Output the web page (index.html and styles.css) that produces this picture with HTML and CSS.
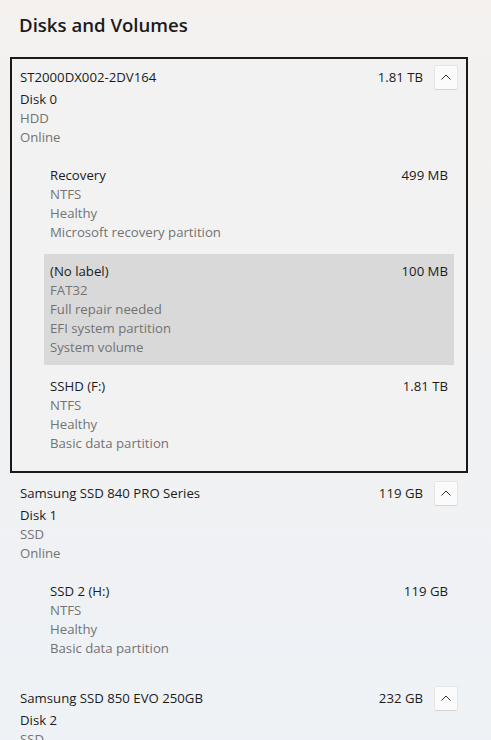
FILE: index.html
```html
<!DOCTYPE html>
<html>
<head>
    <title>Disks and Volumes</title>
    <link rel="stylesheet" href="styles.css">
</head>
<body>
    <h2 class="title">Disks and Volumes</h2>
    <div class="disks">
        <div class="disk focused">
            <div class="disk-head">
                <span class="name">ST2000DX002-2DV164</span>
                <span class="size">1.81 TB</span>
                <button class="toggle"><svg width="10" height="6" viewBox="0 0 10 6"><path d="M0.5 5.5 L5 1 L9.5 5.5" fill="none" stroke="#333" stroke-width="1"/></svg></button>
            </div>
            <div class="line">Disk 0</div>
            <div class="line muted">HDD</div>
            <div class="line muted">Online</div>
            <div class="parts">
                <div class="part">
                    <div class="part-head"><span>Recovery</span><span>499 MB</span></div>
                    <div class="line muted">NTFS</div>
                    <div class="line muted">Healthy</div>
                    <div class="line muted">Microsoft recovery partition</div>
                </div>
                <div class="part selected">
                    <div class="part-head"><span>(No label)</span><span>100 MB</span></div>
                    <div class="line muted">FAT32</div>
                    <div class="line muted">Full repair needed</div>
                    <div class="line muted">EFI system partition</div>
                    <div class="line muted">System volume</div>
                </div>
                <div class="part">
                    <div class="part-head"><span>SSHD (F:)</span><span>1.81 TB</span></div>
                    <div class="line muted">NTFS</div>
                    <div class="line muted">Healthy</div>
                    <div class="line muted">Basic data partition</div>
                </div>
            </div>
        </div>
        <div class="disk">
            <div class="disk-head">
                <span class="name">Samsung SSD 840 PRO Series</span>
                <span class="size">119 GB</span>
                <button class="toggle"><svg width="10" height="6" viewBox="0 0 10 6"><path d="M0.5 5.5 L5 1 L9.5 5.5" fill="none" stroke="#333" stroke-width="1"/></svg></button>
            </div>
            <div class="line">Disk 1</div>
            <div class="line muted">SSD</div>
            <div class="line muted">Online</div>
            <div class="parts">
                <div class="part">
                    <div class="part-head"><span>SSD 2 (H:)</span><span>119 GB</span></div>
                    <div class="line muted">NTFS</div>
                    <div class="line muted">Healthy</div>
                    <div class="line muted">Basic data partition</div>
                </div>
            </div>
        </div>
        <div class="disk">
            <div class="disk-head">
                <span class="name">Samsung SSD 850 EVO 250GB</span>
                <span class="size">232 GB</span>
                <button class="toggle"><svg width="10" height="6" viewBox="0 0 10 6"><path d="M0.5 5.5 L5 1 L9.5 5.5" fill="none" stroke="#333" stroke-width="1"/></svg></button>
            </div>
            <div class="line">Disk 2</div>
            <div class="line muted">SSD</div>
            <div class="line muted">Online</div>
        </div>
    </div>
</body>
</html>
```
FILE: styles.css
```css
html, body {
    height: 100%;
}
body {
    margin: 0;
    background: linear-gradient(180deg, #f4f1ef 0%, #f1f1f2 45%, #eef2f6 100%);
    font-family: "Open Sans", "Noto Sans", sans-serif;
    font-size: 13.2px;
    color: #1b1b1b;
    overflow: hidden;
}
.title {
    margin: 0;
    padding: 11px 19px 0;
    font-size: 18.6px;
    font-weight: 600;
    line-height: 28px;
}
.disks {
    padding: 18px 23px 0 10px;
}
.disk {
    border: 2px solid transparent;
    padding: 5px 8px 10px;
}
.disk.focused {
    border-color: #1a1a1a;
    background: #f2f2f2;
}
.disk-head {
    display: flex;
    align-items: center;
    height: 26px;
}
.name {
    flex: 1;
}
.toggle {
    width: 24px;
    height: 25px;
    margin-left: 11px;
    padding: 0;
    background: #fbfbfb;
    border: 1px solid #e6e6e6;
    border-bottom-color: #d4d4d4;
    border-radius: 2px;
    display: flex;
    align-items: center;
    justify-content: center;
}
.line {
    line-height: 19px;
}
.muted {
    color: #737373;
}
.parts {
    display: flex;
    flex-direction: column;
    gap: 4px;
    margin: 11px 4px 0 24px;
}
.part {
    padding: 8px 6px;
}
.part.selected {
    background: #d9d9d9;
}
.part-head {
    display: flex;
    justify-content: space-between;
    line-height: 19px;
}
```
